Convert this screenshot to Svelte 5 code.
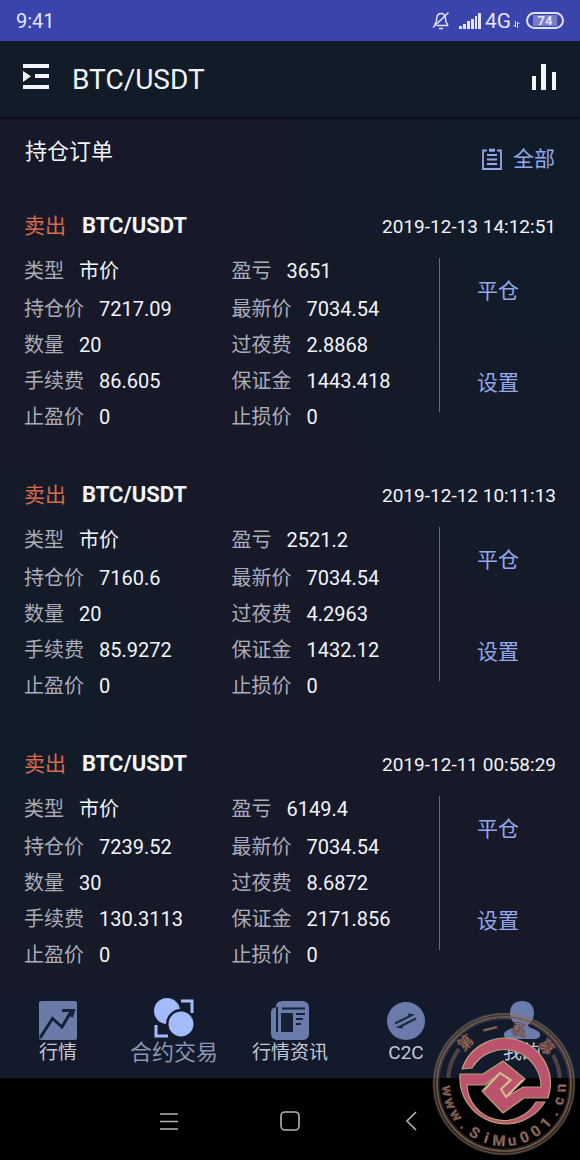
<script>
	const orders = [
		{
			time: "2019-12-13 14:12:51",
			fields: [
				["类型", "市价"], ["盈亏", "3651"],
				["持仓价", "7217.09"], ["最新价", "7034.54"],
				["数量", "20"], ["过夜费", "2.8868"],
				["手续费", "86.605"], ["保证金", "1443.418"],
				["止盈价", "0"], ["止损价", "0"]
			]
		},
		{
			time: "2019-12-12 10:11:13",
			fields: [
				["类型", "市价"], ["盈亏", "2521.2"],
				["持仓价", "7160.6"], ["最新价", "7034.54"],
				["数量", "20"], ["过夜费", "4.2963"],
				["手续费", "85.9272"], ["保证金", "1432.12"],
				["止盈价", "0"], ["止损价", "0"]
			]
		},
		{
			time: "2019-12-11 00:58:29",
			fields: [
				["类型", "市价"], ["盈亏", "6149.4"],
				["持仓价", "7239.52"], ["最新价", "7034.54"],
				["数量", "30"], ["过夜费", "8.6872"],
				["手续费", "130.3113"], ["保证金", "2171.856"],
				["止盈价", "0"], ["止损价", "0"]
			]
		}
	];

	const tabs = [
		{ id: "market", label: "行情" },
		{ id: "trade", label: "合约交易" },
		{ id: "news", label: "行情资讯" },
		{ id: "c2c", label: "C2C" },
		{ id: "mine", label: "我的" }
	];

	let active = $state("trade");

	// glyphs placed round the seal, angle in degrees
	const sealTop = [["第", -43], ["一", -14], ["私", 16], ["募", 49]];
	const sealBottom = [..."www.SiMu001.cn"].map((ch, i) => [ch, 83 - i * 13]);
</script>

<div class="app">
	<div class="status">
		<span class="clock">9:41</span>
		<div class="signals">
			<svg width="18" height="20" viewBox="0 0 18 20" fill="none" stroke="#e4e6f8" stroke-width="1.5">
				<path d="M3 14.5V13C5 11 4.5 9 4.8 7C5.2 4 7 2.6 9 2.6C11.5 2.6 13.2 4.5 13.4 7.5C13.6 10.5 13.8 11.5 15.5 13.5V14.5H5" />
				<path d="M7 17.5H11M1 16.5L16.5 1.5" />
			</svg>
			<svg width="22" height="18" viewBox="0 0 22 18" fill="#e4e6f8">
				<path d="M0 14h3v3H0zM4 12h3v5H4zM8 9h3v8H8zM12 7h3v10h-3zM16 4h2v13h-2zM19 1h3v16h-3z" />
			</svg>
			<span class="net">4G</span>
			<svg class="updown" width="7" height="7" viewBox="0 0 7 7" fill="none" stroke="#e4e6f8">
				<path d="M2.5 0V6L0.5 4M4.5 7V1L6.5 3" />
			</svg>
			<span class="battery"><span>74</span></span>
		</div>
	</div>

	<header>
		<button class="icon" aria-label="menu">
			<svg width="26" height="26" viewBox="0 0 26 26" fill="#f2f5fb">
				<path d="M0 0h26v4H0zM12 10h14v4H12zM0 21h26v4H0zM0 7L8 12.3L0 18z" />
			</svg>
		</button>
		<h1>BTC/USDT</h1>
		<button class="icon chart" aria-label="chart">
			<svg width="26" height="26" viewBox="0 0 26 26" fill="#f2f5fb">
				<path d="M1 12h4v14h-4zM10 0h5v26h-5zM21 8h4v18h-4z" />
			</svg>
		</button>
	</header>

	<div class="section">
		<h2>持仓订单</h2>
		<button class="all">
			<svg width="20" height="22" viewBox="0 0 20 22" fill="none" stroke="#93a8ee" stroke-width="1.8">
				<path d="M5 2.5H1V21H19V2.5H15" />
				<path d="M7 2.2H13" stroke-width="3" />
				<path d="M5 7H15M5 11.5H15M5 16H15" />
			</svg>
			全部
		</button>
	</div>

	<main>
		{#each orders as order}
			<article>
				<div class="head">
					<span class="side">卖出</span>
					<h3>BTC/USDT</h3>
					<time>{order.time}</time>
				</div>
				<div class="body">
					<dl>
						{#each order.fields as [name, value]}
							<div>
								<dt>{name}</dt>
								<dd>{value}</dd>
							</div>
						{/each}
					</dl>
					<div class="actions">
						<button>平仓</button>
						<button>设置</button>
					</div>
				</div>
			</article>
		{/each}
	</main>

	<nav class="tabs">
		{#each tabs as tab}
			<button class:active={active == tab.id} onclick={() => (active = tab.id)}>
				<svg width="40" height="40" viewBox="0 0 40 40">
					{#if tab.id == "market"}
						<rect x="1" y="1" width="38" height="39" rx="2" fill="#6b7aa6" />
						<path d="M2 38L14.5 18.5L24 27L34 10M24 10.5H35.5L33.5 17" fill="none" stroke="#14203a" stroke-width="3" />
					{:else if tab.id == "trade"}
						<path d="M2 25V36H14" fill="none" stroke="#a3bbfc" stroke-width="3" />
						<circle cx="13" cy="11" r="13" fill="#a3bbfc" />
						<circle cx="27" cy="24" r="15" fill="#131a2c" />
						<circle cx="27" cy="24" r="12.5" fill="#a3bbfc" />
						<path d="M27 1H38V13" fill="none" stroke="#a3bbfc" stroke-width="3" />
					{:else if tab.id == "news"}
						<path d="M6 7C2 8 1 10 1 13V33C1 38 4 40 8 40H33C37 40 39 37 39 33V8C39 3 36 1 32 1H14C8 1 6 3 6 7Z" fill="#6b7bab" />
						<path d="M7 7V32" fill="none" stroke="#162036" stroke-width="2" />
						<path d="M11 13H23V32H11Z" fill="#162036" />
						<path d="M12 8.5H35M26 14H35M26 19H33M26 24H31" stroke="#162036" stroke-width="2" />
					{:else if tab.id == "c2c"}
						<circle cx="20" cy="21" r="19" fill="#6b7bab" />
						<path d="M9 23.5L26 15L22 14.5M30 18.5L13 27L17 27.5" fill="none" stroke="#1c2740" stroke-width="2" />
					{:else}
						<path d="M20 1C27 1 32 5 32 13C32 19 29 22 26 25C26 28 34 29 37 32C40 36 37 39 33 39H7C3 39 0 36 3 32C6 29 14 28 14 25C11 22 8 19 8 13C8 5 13 1 20 1Z" fill="#6b7bab" />
					{/if}
				</svg>
				<span>{tab.label}</span>
			</button>
		{/each}
	</nav>

	<div class="system">
		<button aria-label="recent">
			<svg width="20" height="20" viewBox="0 0 20 20" stroke="#b4b4b4" stroke-width="1.6">
				<path d="M1 3H19M1 10.5H19M1 18H19" />
			</svg>
		</button>
		<button aria-label="home">
			<svg width="20" height="20" viewBox="0 0 20 20" fill="none" stroke="#b4b4b4" stroke-width="1.6">
				<rect x="1" y="1" width="18" height="18" rx="4" />
			</svg>
		</button>
		<button aria-label="back">
			<svg width="20" height="20" viewBox="0 0 20 20" fill="none" stroke="#b4b4b4" stroke-width="1.6">
				<path d="M15 1L6 10L15 19" />
			</svg>
		</button>
	</div>

	<svg class="seal" width="144" height="144" viewBox="0 0 144 144">
		<g fill="none">
			<circle cx="72" cy="72" r="68" stroke="#8b7865" stroke-opacity="0.3" stroke-width="7" />
			<circle cx="72" cy="72" r="70" stroke="#8b7865" stroke-opacity="0.65" />
			<circle cx="72" cy="72" r="67" stroke="#7a5a50" stroke-width="1.5" />
			<g stroke="#8b7865" stroke-opacity="0.45" stroke-width="4">
				<path d="M16 66A57 57 0 0 1 27 37M128 66A57 57 0 0 0 121 43" />
			</g>
			<path d="M16 66A57 57 0 0 1 27 37M128 66A57 57 0 0 0 121 43" stroke="#5b3a3c" />
		</g>
		<g fill="#bd526c" stroke="#b8a279" stroke-width="1.2" stroke-linejoin="round">
			<path d="M30 57A45 45 0 0 1 116 86H92L71 101L50 79L68 61L78 68L69 77L74 85L91 75H109A37 37 0 0 0 40 56Z" />
			<path d="M28 62H51L71 49L93 67L74 85L69 77L78 68L68 61L53 73H35A37 37 0 0 0 104 90H113A46 46 0 0 1 28 62Z" />
			<path d="M52 78L68 61L79 68L69 77L74 85L91 68" fill="none" stroke="#d0bc8c" stroke-width="2" />
		</g>
		<g class="ring">
			{#each sealTop as [ch, angle]}
				<text x="72" y="21" font-size="15" transform="rotate({angle} 72 72)">{ch}</text>
			{/each}
			{#each sealBottom as [ch, angle]}
				<text x="72" y="134" font-size="15" transform="rotate({angle} 72 72)">{ch}</text>
			{/each}
		</g>
	</svg>
</div>

<style>
	:global(body) {
		margin: 0;
		background: #000;
	}
	.app {
		position: relative;
		display: flex;
		flex-direction: column;
		min-height: 100vh;
		font-family: Roboto, "Noto Sans CJK SC", sans-serif;
		color: #f2f5fb;
		background:
			radial-gradient(ellipse at 95% 8%, #101c29, transparent 50%),
			radial-gradient(ellipse at 0% 60%, #101c29, transparent 35%),
			#181928;
	}
	button {
		margin: 0;
		padding: 0;
		border: 0;
		background: none;
		font: inherit;
		color: inherit;
	}
	svg {
		display: block;
	}
	h1, h2, h3, dl, dd {
		margin: 0;
		font-weight: 400;
	}

	.status {
		display: flex;
		align-items: center;
		justify-content: space-between;
		box-sizing: border-box;
		height: 41px;
		padding: 0 16px;
		background: #3b43ad;
		color: #e4e6f8;
	}
	.clock {
		font-size: 20px;
	}
	.signals {
		display: flex;
		align-items: center;
		gap: 4px;
	}
	.signals svg:first-child {
		margin-right: 5px;
	}
	.net {
		font-size: 21px;
	}
	.updown {
		margin: 8px 2px 0 -2px;
	}
	.battery {
		display: flex;
		justify-content: center;
		box-sizing: border-box;
		width: 38px;
		height: 17px;
		padding: 1px;
		border: 2px solid #dfe2f7;
		border-radius: 9px;
		font-size: 13px;
		font-weight: 700;
		line-height: 12px;
	}
	.battery span {
		padding: 0 5px;
		background: #777dcb;
	}

	header {
		display: flex;
		align-items: center;
		box-sizing: border-box;
		height: 78px;
		padding: 0 23px;
		background: #121b28;
		border-top: 1px solid #0e1233;
		border-bottom: 2px solid #0b0e1a;
	}
	header .icon {
		padding-bottom: 6px;
	}
	header .chart {
		margin-left: auto;
	}
	h1 {
		margin-left: 23px;
		font-size: 28px;
	}

	.section {
		display: flex;
		justify-content: space-between;
		align-items: flex-start;
		padding: 17px 25px 0;
		line-height: 32px;
	}
	h2 {
		font-size: 22px;
	}
	.all {
		display: flex;
		align-items: center;
		gap: 11px;
		padding-top: 7px;
		font-size: 21px;
		color: #93a8ee;
	}

	main {
		flex: 1;
		padding-top: 35px;
	}
	article {
		padding: 0 24px;
	}
	article + article {
		margin-top: 35px;
	}
	.head {
		display: flex;
		align-items: baseline;
		height: 32px;
		line-height: 32px;
	}
	.side {
		margin-right: 16px;
		font-size: 21px;
		color: #d9694c;
	}
	h3 {
		font-size: 22px;
		font-weight: 700;
	}
	time {
		margin-left: auto;
		font-size: 19px;
	}
	.body {
		display: flex;
		padding-top: 11px;
	}
	dl {
		flex: 416;
		display: grid;
		grid-template-columns: 1fr 1fr;
		grid-template-rows: 38px;
		grid-auto-rows: 36px;
		margin-bottom: 9px;
		font-size: 20px;
		line-height: 36px;
	}
	dl div {
		display: flex;
		gap: 15px;
	}
	dt {
		color: #a9acb9;
	}
	.actions {
		flex: 116;
		display: flex;
		flex-direction: column;
		justify-content: center;
		gap: 44px;
		box-sizing: border-box;
		height: 154px;
		margin-top: 5px;
		padding-top: 3px;
		border-left: 1px solid #5d6a99;
		font-size: 21px;
		color: #93a8ee;
	}
	.actions button {
		line-height: 48px;
	}

	.tabs {
		display: flex;
		padding: 8px 0 12px;
		background: #131a2c;
	}
	.tabs button {
		flex: 1 1 0;
		display: flex;
		flex-direction: column;
		align-items: center;
		font-size: 19px;
		line-height: 26px;
		color: #c3c8d4;
		white-space: nowrap;
	}
	.tabs svg {
		overflow: visible;
	}
	.tabs .active {
		font-size: 22px;
		color: #8a97b2;
	}

	.system {
		display: flex;
		justify-content: center;
		align-items: center;
		gap: 101px;
		height: 82px;
		padding-top: 4px;
		box-sizing: border-box;
		background: #000;
	}

	.seal {
		position: absolute;
		right: 4px;
		bottom: 4px;
	}
	.ring text {
		text-anchor: middle;
		font-weight: 700;
		fill: #8a7a68;
		stroke: #6b3838;
		stroke-width: 0.6px;
	}
</style>
